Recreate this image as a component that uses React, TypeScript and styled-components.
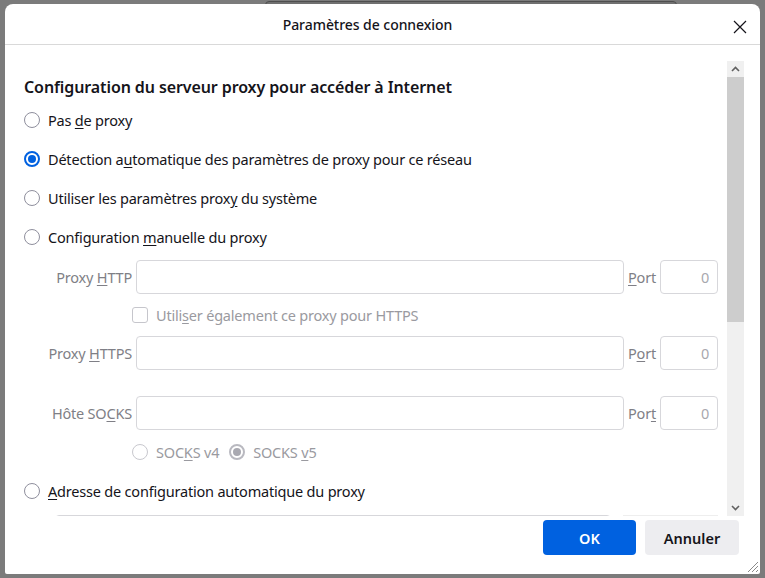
import styled, { createGlobalStyle } from "styled-components";

const GlobalStyle = createGlobalStyle`
  html, body {
    margin: 0;
    padding: 0;
    background: #7b7b7b;
    font-family: "Noto Sans", "Open Sans", sans-serif;
    color: #15141a;
  }
`;

const Screen = styled.div`
  position: relative;
  width: 765px;
  height: 578px;
  padding: 4px 5px 0 5px;
  box-sizing: border-box;
  overflow: hidden;
`;

const BackWindow = styled.div`
  position: absolute;
  left: 265px;
  top: 1px;
  width: 410px;
  height: 12px;
  border: 1px solid #4e4e4e;
  border-radius: 4px;
  background: #707070;
`;

const Dialog = styled.div`
  position: relative;
  width: 755px;
  height: 570px;
  background: #ffffff;
  border-radius: 8px 8px 2px 2px;
  display: flex;
  flex-direction: column;
`;

const TitleBar = styled.div`
  height: 40px;
  flex-shrink: 0;
  display: flex;
  align-items: center;
  justify-content: center;
  position: relative;
  padding-right: 30px;
  border-bottom: 1px solid #d9d9d9;
`;

const Title = styled.div`
  font-size: 14px;
  font-weight: 500;
  letter-spacing: -0.05px;
`;

const CloseButton = styled.div`
  position: absolute;
  right: 13px;
  top: 13px;
  width: 14px;
  height: 14px;
`;

const Body = styled.div`
  flex: 1;
  display: flex;
  padding: 16px 16px 0 16px;
  min-height: 0;
`;

const Viewport = styled.div`
  flex: 1;
  height: 455px;
  overflow: hidden;
  padding: 14px 9px 0 3px;
  box-sizing: border-box;
`;

const Scrollbar = styled.div`
  width: 17px;
  height: 455px;
  display: flex;
  flex-direction: column;
  background: #f0f0f0;
`;

const ScrollArrow = styled.div`
  height: 16px;
  display: flex;
  align-items: center;
  justify-content: center;
`;

const ScrollThumb = styled.div`
  height: 245px;
  background: #cdcdcd;
`;

const ScrollTrack = styled.div`
  flex: 1;
`;

const Heading = styled.div`
  font-size: 16px;
  font-weight: 600;
  line-height: 24px;
  height: 24px;
  letter-spacing: -0.1px;
  margin-bottom: 9px;
`;

const RadioList = styled.div`
  display: flex;
  flex-direction: column;
  gap: 15px;
`;

const RadioRow = styled.div<{ $disabled?: boolean }>`
  display: flex;
  align-items: center;
  gap: 8px;
  height: 24px;
  font-size: 14.5px;
  letter-spacing: -0.2px;
  color: ${(p) => (p.$disabled ? "#8a8a90" : "#15141a")};
`;

const RadioCircle = styled.span<{ $checked?: boolean; $disabled?: boolean }>`
  width: 16px;
  height: 16px;
  box-sizing: border-box;
  border-radius: 50%;
  flex-shrink: 0;
  display: flex;
  align-items: center;
  justify-content: center;
  border: ${(p) =>
    p.$checked
      ? `2px solid ${p.$disabled ? "#b9b9c0" : "#0061e0"}`
      : `1px solid ${p.$disabled ? "#c8c8ce" : "#8f8f9d"}`};
  &::after {
    content: "";
    display: ${(p) => (p.$checked ? "block" : "none")};
    width: 8px;
    height: 8px;
    border-radius: 50%;
    background: ${(p) => (p.$disabled ? "#a9a9b1" : "#0061e0")};
  }
`;

const Key = styled.span`
  text-decoration: underline;
  text-underline-offset: 2px;
`;

const ManualBlock = styled.div`
  margin: 11px 0 0 24px;
  display: grid;
  grid-template-columns: 84px 1fr auto 58px;
  column-gap: 4px;
  align-items: center;
  color: #7f7f86;
  font-size: 14.5px;
  letter-spacing: -0.2px;
`;

const FieldLabel = styled.div`
  text-align: right;
`;

const PortLabel = styled.div`
  width: 28px;
`;

const TextInput = styled.div<{ $align?: "left" | "right" }>`
  height: 34px;
  box-sizing: border-box;
  border: 1px solid #d7d7db;
  border-radius: 4px;
  background: #fff;
  display: flex;
  align-items: center;
  justify-content: ${(p) => (p.$align === "right" ? "flex-end" : "flex-start")};
  padding: 0 8px;
  color: #a8a8ae;
`;

const SubRow = styled.div<{ $top: number }>`
  grid-column: 2 / 5;
  margin: ${(p) => p.$top}px 0 10px -4px;
  display: flex;
  align-items: center;
  gap: 8px;
  height: 22px;
  color: #9a9aa0;
`;

const Checkbox = styled.span`
  width: 16px;
  height: 16px;
  box-sizing: border-box;
  border: 1px solid #c6c6cc;
  border-radius: 3px;
`;

const Spacer = styled.div`
  grid-column: 1 / 5;
  height: 26px;
`;

const SocksOption = styled.span`
  display: flex;
  align-items: center;
  gap: 8px;
  margin-right: 2px;
`;

const AutoRow = styled(RadioRow)`
  margin-top: 6px;
`;

const UrlRow = styled.div`
  margin: 12px 0 0 31px;
  display: flex;
  gap: 12px;
`;

const UrlInput = styled.div`
  width: 555px;
  height: 34px;
  border: 1px solid #d7d7db;
  border-radius: 4px;
`;

const ReloadButton = styled.div`
  width: 95px;
  height: 34px;
  border-top: 1px solid #eeeeee;
`;

const Footer = styled.div`
  display: flex;
  justify-content: flex-end;
  gap: 9px;
  padding: 4px 21px 19px 0;
`;

const Button = styled.div<{ $primary?: boolean }>`
  width: ${(p) => (p.$primary ? 93 : 94)}px;
  height: 35px;
  border-radius: 4px;
  display: flex;
  align-items: center;
  justify-content: center;
  font-size: 14.5px;
  font-weight: 600;
  background: ${(p) => (p.$primary ? "#0061e0" : "#ededf0")};
  color: ${(p) => (p.$primary ? "#ffffff" : "#15141a")};
`;

const Grip = styled.svg`
  position: absolute;
  right: 1px;
  bottom: 1px;
`;

export default function App() {
  return (
    <>
      <GlobalStyle />
      <Screen>
        <BackWindow />
        <Dialog>
          <TitleBar>
            <Title>Paramètres de connexion</Title>
            <CloseButton>
              <svg width="14" height="14" viewBox="0 0 14 14">
                <path d="M1 1 L13 13 M13 1 L1 13" stroke="#15141a" strokeWidth="1.2" />
              </svg>
            </CloseButton>
          </TitleBar>
          <Body>
            <Viewport>
              <Heading>Configuration du serveur proxy pour accéder à Internet</Heading>
              <RadioList>
                <RadioRow>
                  <RadioCircle />
                  <span>
                    Pas <Key>d</Key>e proxy
                  </span>
                </RadioRow>
                <RadioRow>
                  <RadioCircle $checked />
                  <span>
                    Détection a<Key>u</Key>tomatique des paramètres de proxy pour ce réseau
                  </span>
                </RadioRow>
                <RadioRow>
                  <RadioCircle />
                  <span>
                    Utiliser les paramètres prox<Key>y</Key> du système
                  </span>
                </RadioRow>
                <RadioRow>
                  <RadioCircle />
                  <span>
                    Configuration <Key>m</Key>anuelle du proxy
                  </span>
                </RadioRow>
              </RadioList>

              <ManualBlock>
                <FieldLabel>
                  Proxy <Key>H</Key>TTP
                </FieldLabel>
                <TextInput />
                <PortLabel>
                  <Key>P</Key>ort
                </PortLabel>
                <TextInput $align="right">0</TextInput>

                <SubRow $top={10}>
                  <Checkbox />
                  <span>
                    Utili<Key>s</Key>er également ce proxy pour HTTPS
                  </span>
                </SubRow>

                <FieldLabel>
                  Proxy <Key>H</Key>TTPS
                </FieldLabel>
                <TextInput />
                <PortLabel>
                  P<Key>o</Key>rt
                </PortLabel>
                <TextInput $align="right">0</TextInput>

                <Spacer />

                <FieldLabel>
                  Hôte SO<Key>C</Key>KS
                </FieldLabel>
                <TextInput />
                <PortLabel>
                  Por<Key>t</Key>
                </PortLabel>
                <TextInput $align="right">0</TextInput>

                <SubRow $top={11}>
                  <SocksOption>
                    <RadioCircle $disabled />
                    <span>
                      SOC<Key>K</Key>S v4
                    </span>
                  </SocksOption>
                  <SocksOption>
                    <RadioCircle $checked $disabled />
                    <span>
                      SOCKS <Key>v</Key>5
                    </span>
                  </SocksOption>
                </SubRow>
              </ManualBlock>

              <AutoRow>
                <RadioCircle />
                <span>
                  <Key>A</Key>dresse de configuration automatique du proxy
                </span>
              </AutoRow>
              <UrlRow>
                <UrlInput />
                <ReloadButton />
              </UrlRow>
            </Viewport>
            <Scrollbar>
              <ScrollArrow>
                <svg width="9" height="6" viewBox="0 0 9 6">
                  <path d="M1 5 L4.5 1.5 L8 5" stroke="#606060" strokeWidth="1.6" fill="none" />
                </svg>
              </ScrollArrow>
              <ScrollThumb />
              <ScrollTrack />
              <ScrollArrow>
                <svg width="9" height="6" viewBox="0 0 9 6">
                  <path d="M1 1 L4.5 4.5 L8 1" stroke="#606060" strokeWidth="1.6" fill="none" />
                </svg>
              </ScrollArrow>
            </Scrollbar>
          </Body>
          <Footer>
            <Button $primary>OK</Button>
            <Button>Annuler</Button>
          </Footer>
          <Grip width="14" height="14" viewBox="0 0 14 14">
            <path d="M13 3 L3 13 M13 7 L7 13 M13 11 L11 13" stroke="#8a8a8a" strokeWidth="1" />
          </Grip>
        </Dialog>
      </Screen>
    </>
  );
}
